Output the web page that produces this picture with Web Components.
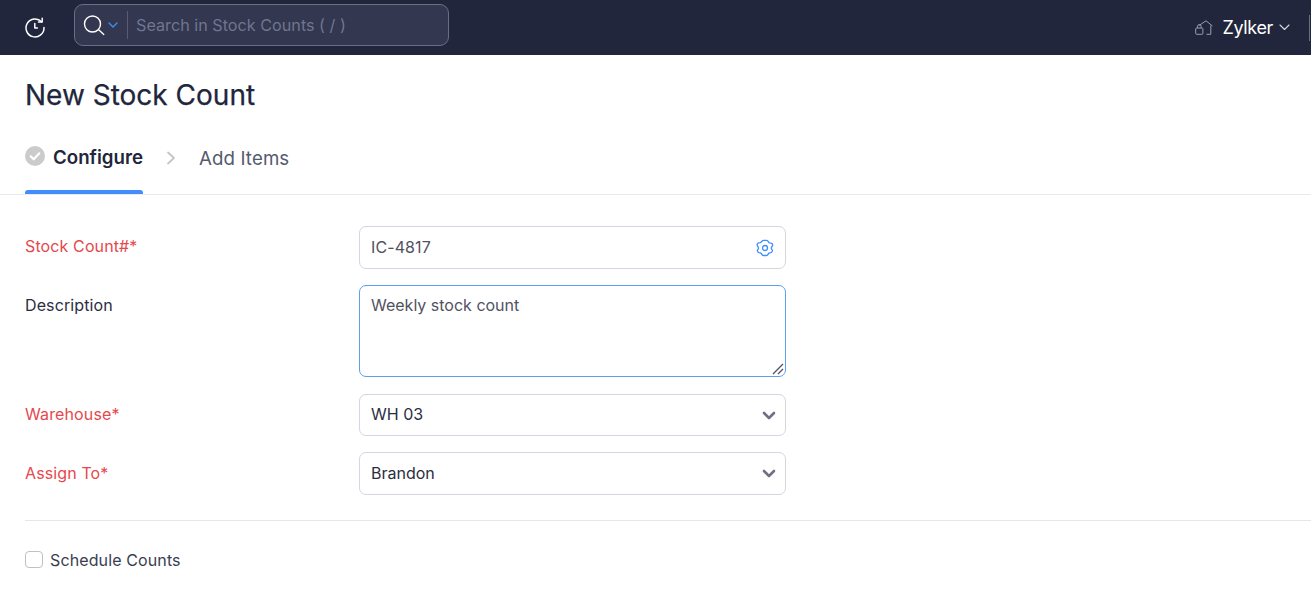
<!DOCTYPE html>
<html>
<head>
<meta charset="utf-8">
<title>New Stock Count</title>
<style>
  html, body { margin: 0; padding: 0; background: #fff; overflow: hidden; }
  body { font-family: "Inter", "Liberation Sans", sans-serif; color: #21263c; height: 593px; }
</style>
</head>
<body>
<top-bar></top-bar>
<page-title>New Stock Count</page-title>
<step-tabs></step-tabs>
<count-form>
  <form-row label="Stock Count#*" required height="43">
    <text-box value="IC-4817" color="#51525f" gear></text-box>
  </form-row>
  <form-row label="Description" height="92" gap="16">
    <note-box value="Weekly stock count"></note-box>
  </form-row>
  <form-row label="Warehouse*" required height="42" gap="17">
    <select-box value="WH 03"></select-box>
  </form-row>
  <form-row label="Assign To*" required height="43" gap="16" label-top="11">
    <select-box value="Brandon"></select-box>
  </form-row>
</count-form>
<schedule-check>Schedule Counts</schedule-check>

<script>
class TopBar extends HTMLElement {
  constructor () {
    super()
    this.attachShadow({ mode: 'open' }).innerHTML = /*html*/`
      <style>
        :host {
          display: flex;
          align-items: center;
          height: 55px;
          background: #21263c;
          box-sizing: border-box;
          padding: 0 1px 5px 23px;
          font-family: "Inter", sans-serif;
        }
        .history { width: 24px; height: 24px; margin-right: 27px; margin-top: 3px; flex: none; }
        .search {
          display: flex;
          align-items: center;
          width: 375px;
          height: 42px;
          box-sizing: border-box;
          background: #33374f;
          border: 1px solid #6b6f84;
          border-radius: 9px;
          padding-left: 8px;
          flex: none;
        }
        .divider { width: 1px; height: 28px; background: #585c72; margin: 0 8px 0 9px; }
        .placeholder { font-size: 16.2px; color: #6f7690; }
        .org {
          margin-left: auto;
          display: flex;
          align-items: center;
          color: #fff;
          font-size: 18px;
          margin-top: 5px;
        }
        .org .name { margin: 0 6px 0 9px; letter-spacing: -0.35px; }
        .edge { width: 1px; height: 26px; background: #6a6e82; margin-left: 19px; }
      </style>
      <svg class="history" viewBox="0 0 24 24" fill="none" stroke="#fff" stroke-width="1.5" stroke-linecap="round" stroke-linejoin="round">
        <path d="M18.6 6.8A9 9 0 1 0 21 12.6"/>
        <path d="M19.2 3.2v3.9h-3.7"/>
        <path d="M11.8 8.6v4.4h2.6"/>
      </svg>
      <div class="search">
        <svg width="24" height="24" viewBox="0 0 24 24" fill="none" stroke="#fff" stroke-width="1.4" stroke-linecap="round">
          <circle cx="9.5" cy="11" r="8"/>
          <path d="M15.4 16.6l5.4 4.8"/>
        </svg>
        <svg width="10" height="6" viewBox="0 0 10 6" fill="none" stroke="#3f8cf0" stroke-width="1.4" stroke-linecap="round" stroke-linejoin="round" style="margin-left:1px">
          <path d="M1 1l4 4 4-4"/>
        </svg>
        <span class="divider"></span>
        <span class="placeholder">Search in Stock Counts ( / )</span>
      </div>
      <div class="org">
        <svg width="18" height="15" viewBox="0 0 18 15" fill="none" stroke="#9a9dac" stroke-width="1" stroke-linejoin="round">
          <path d="M4 5.5L11 .8l6.5 5.2"/>
          <path d="M15.8 5.5v8.8h-4.3"/>
          <rect x=".7" y="8" width="7.2" height="6.3" rx="1"/>
          <path d="M2.5 8V6.4a1.8 1.8 0 0 1 3.6 0V8"/>
        </svg>
        <span class="name">Zylker</span>
        <svg width="11" height="7" viewBox="0 0 11 7" fill="none" stroke="#d8d9e0" stroke-width="1.1" stroke-linecap="round" stroke-linejoin="round">
          <path d="M1 1l4.5 4.5L10 1"/>
        </svg>
        <span class="edge"></span>
      </div>
    `
  }
}

class PageTitle extends HTMLElement {
  constructor () {
    super()
    this.attachShadow({ mode: 'open' }).innerHTML = /*html*/`
      <style>
        :host {
          display: block;
          padding: 22px 25px 0;
          height: 53px;
          font-size: 28px;
          line-height: 36px;
          font-weight: 400;
          -webkit-text-stroke: 0.25px #21263c;
          color: #21263c;
          font-family: "Inter", sans-serif;
        }
      </style>
      <slot></slot>
    `
  }
}

class StepTabs extends HTMLElement {
  constructor () {
    super()
    this.attachShadow({ mode: 'open' }).innerHTML = /*html*/`
      <style>
        :host {
          display: flex;
          height: 64px;
          padding: 0 25px;
          border-bottom: 1px solid #e9e9ee;
          font-family: "Inter", sans-serif;
          font-size: 18.7px;
        }
        .active {
          display: flex;
          flex-direction: column;
          justify-content: space-between;
          padding-top: 16px;
          box-sizing: border-box;
          height: 64px;
          font-weight: 600;
          color: #21263c;
          line-height: 22px;
        }
        .head { display: flex; gap: 8px; }
        .head span { margin-top: 1px; }
        .bar { height: 4px; background: #408dfb; border-radius: 3px 3px 0 0; }
        .check { flex: none; }
        .chev { margin: 21px 23px 0 23px; flex: none; }
        .next { padding-top: 18px; line-height: 22px; color: #555a6e; letter-spacing: 0.1px; }
      </style>
      <div class="active">
        <div class="head">
          <svg class="check" width="20" height="20" viewBox="0 0 20 20">
            <circle cx="10" cy="10" r="10" fill="#cbcbcb"/>
            <path d="M5.7 10.3l3 3 5.6-6" fill="none" stroke="#fff" stroke-width="2.2" stroke-linecap="round" stroke-linejoin="round"/>
          </svg>
          <span>Configure</span>
        </div>
        <div class="bar"></div>
      </div>
      <svg class="chev" width="10" height="14" viewBox="0 0 10 14" fill="none" stroke="#c4c4c8" stroke-width="1.7" stroke-linecap="round" stroke-linejoin="round">
        <path d="M2 1.5L8 7l-6 5.5"/>
      </svg>
      <div class="next">Add Items</div>
    `
  }
}

class CountForm extends HTMLElement {
  constructor () {
    super()
    this.attachShadow({ mode: 'open' }).innerHTML = /*html*/`
      <style>
        :host {
          display: block;
          margin: 31px 0 0 25px;
          padding-bottom: 25px;
          border-bottom: 1px solid #e6e6ea;
        }
      </style>
      <slot></slot>
    `
  }
}

class FormRow extends HTMLElement {
  constructor () {
    super()
    const required = this.hasAttribute('required')
    const height = this.getAttribute('height')
    const gap = this.getAttribute('gap') || 0
    const labelTop = this.getAttribute('label-top') || 10
    this.attachShadow({ mode: 'open' }).innerHTML = /*html*/`
      <style>
        :host {
          display: grid;
          grid-template-columns: 334px 427px;
          height: ${height}px;
          margin-top: ${gap}px;
          font-family: "Inter", sans-serif;
          font-size: 16px;
        }
        .label {
          padding-top: ${labelTop}px;
          line-height: 20px;
          letter-spacing: 0.12px;
          color: ${required ? '#e5484d' : '#2b2e42'};
        }
      </style>
      <div class="label">${this.getAttribute('label')}</div>
      <slot></slot>
    `
  }
}

const boxStyle = `
  :host {
    display: flex;
    align-items: center;
    box-sizing: border-box;
    height: 100%;
    padding: 0 8px 0 11px;
    background: #fff;
    border: 1px solid #d6d5e0;
    border-radius: 7px;
    font-family: "Inter", sans-serif;
    font-size: 16px;
    line-height: 20px;
  }
  .value { flex: 1; margin-top: -2px; }
`

class TextBox extends HTMLElement {
  constructor () {
    super()
    const gear = this.hasAttribute('gear')
    this.attachShadow({ mode: 'open' }).innerHTML = /*html*/`
      <style>${boxStyle}
        .value { color: ${this.getAttribute('color') || '#21263c'}; letter-spacing: 0.1px; }
      </style>
      <span class="value">${this.getAttribute('value')}</span>
      ${gear ? `<svg width="18" height="18" viewBox="0 0 18 18" fill="none" stroke="#408dfb" stroke-width="1.3" stroke-linejoin="round" style="margin-right:3px">
        <path d="M6 2.2c.4-.6 1-.9 1.7-.9h2.6c.7 0 1.3.3 1.7.9l.8 1.1c.2.3.5.5.9.6l1.3.2c.7.1 1.3.6 1.5 1.2l.2.9-1.2 2.2c-.3.5-.3 1 0 1.5l1 1.6c-.1.8-.6 1.9-1.6 2.2l-1.4.2c-.4.1-.7.3-.9.6l-.8 1.1c-.4.6-1 .9-1.7.9H7.7c-.7 0-1.3-.3-1.7-.9l-.8-1.1c-.2-.3-.5-.5-.9-.6l-1.4-.2c-1-.3-1.5-1.4-1.6-2.2l1-1.6c.3-.5.3-1 0-1.5L1.1 6l.2-.9c.2-.6.8-1.1 1.5-1.2l1.3-.2c.4-.1.7-.3.9-.6z"/>
        <circle cx="9" cy="9" r="2.5"/>
      </svg>` : ''}
    `
  }
}

class NoteBox extends HTMLElement {
  constructor () {
    super()
    this.attachShadow({ mode: 'open' }).innerHTML = /*html*/`
      <style>${boxStyle}
        :host {
          display: block;
          position: relative;
          padding: 9px 11px;
          border-color: #5a9ff0;
          color: #51525f;
        }
        .value { margin-top: 0; }
        svg { position: absolute; right: 1px; bottom: 1px; }
      </style>
      <span class="value">${this.getAttribute('value')}</span>
      <svg width="12" height="12" viewBox="0 0 12 12" fill="none" stroke="#55566a" stroke-width="1.4">
        <path d="M1 11L11 1M6 11l5-5"/>
      </svg>
    `
  }
}

class SelectBox extends HTMLElement {
  constructor () {
    super()
    this.attachShadow({ mode: 'open' }).innerHTML = /*html*/`
      <style>${boxStyle}
        .value { color: #2b2e42; }
      </style>
      <span class="value">${this.getAttribute('value')}</span>
      <svg width="14" height="9" viewBox="0 0 14 9" fill="none" stroke="#6f7083" stroke-width="2.6" stroke-linecap="round" stroke-linejoin="round" style="margin-right:1px">
        <path d="M2 2l5 5 5-5"/>
      </svg>
    `
  }
}

class ScheduleCheck extends HTMLElement {
  constructor () {
    super()
    this.attachShadow({ mode: 'open' }).innerHTML = /*html*/`
      <style>
        :host {
          display: flex;
          align-items: center;
          gap: 7px;
          margin: 29px 0 0 25px;
          font-family: "Inter", sans-serif;
          font-size: 16px;
          line-height: 20px;
          letter-spacing: 0.12px;
          color: #3a3d50;
        }
        .box {
          width: 18px;
          height: 17px;
          box-sizing: border-box;
          border: 1px solid #bfbfc6;
          border-radius: 4px;
          background: #fff;
          margin-top: -1px;
        }
      </style>
      <span class="box"></span>
      <slot></slot>
    `
  }
}

customElements.define('top-bar', TopBar)
customElements.define('page-title', PageTitle)
customElements.define('step-tabs', StepTabs)
customElements.define('count-form', CountForm)
customElements.define('form-row', FormRow)
customElements.define('text-box', TextBox)
customElements.define('note-box', NoteBox)
customElements.define('select-box', SelectBox)
customElements.define('schedule-check', ScheduleCheck)
</script>
</body>
</html>
